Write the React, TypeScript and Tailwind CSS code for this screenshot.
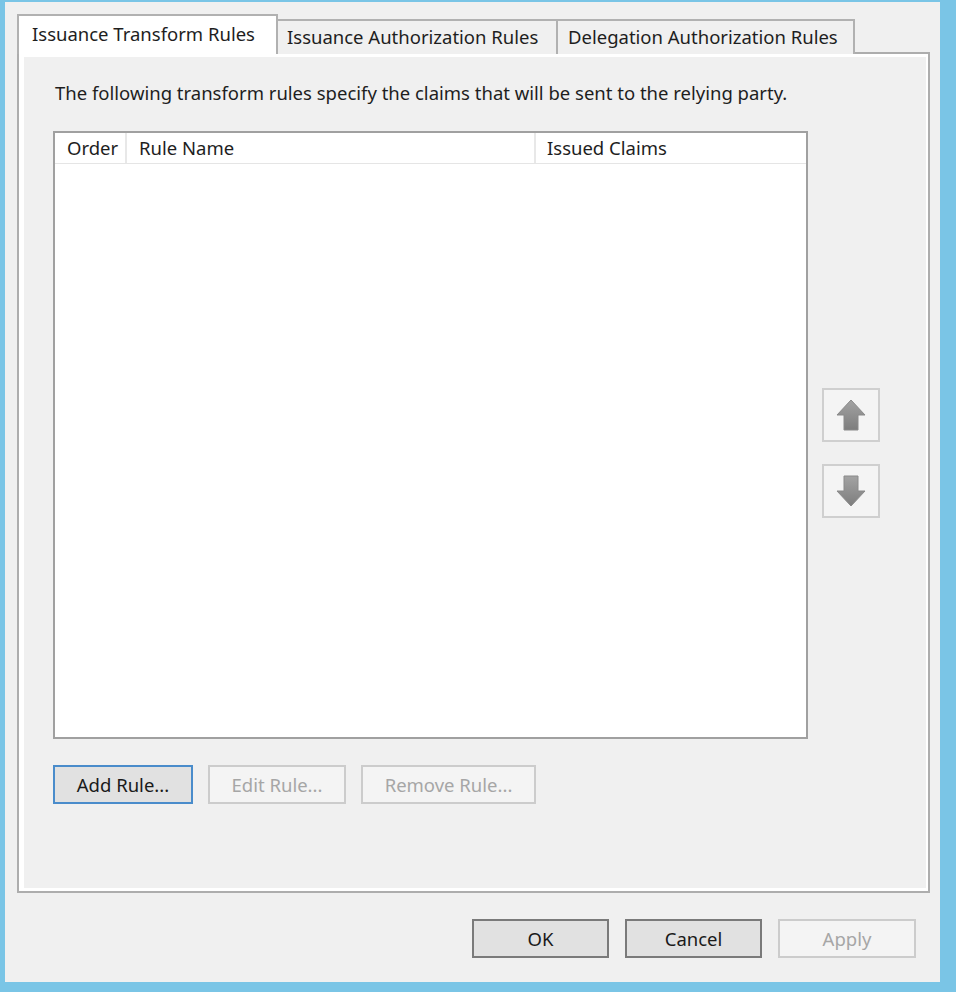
import React from "react";

const font = { fontFamily: '"Noto Sans", "Open Sans", sans-serif' };

function Arrow({ down }: { down?: boolean }) {
    return (
        <svg width="30" height="32" viewBox="0 0 30 32" className={down ? "rotate-180" : ""}>
            <defs>
                <linearGradient id={down ? "gd" : "gu"} x1="0" y1="0" x2="0" y2="1">
                    <stop offset="0" stopColor={down ? "#7d7d7d" : "#a3a3a3"} />
                    <stop offset="1" stopColor={down ? "#a3a3a3" : "#7d7d7d"} />
                </linearGradient>
            </defs>
            <path
                d="M15 1 L29 16 L22 16 L22 31 L8 31 L8 16 L1 16 Z"
                fill={`url(#${down ? "gd" : "gu"})`}
                stroke="#8a8a8a"
                strokeWidth="1"
                strokeLinejoin="round"
            />
        </svg>
    );
}

function Tabs() {
    return (
        <div className="flex items-end h-[40px] -mb-[2px] relative z-10 text-[18.5px] leading-[26px] text-[#1e1e1e]">
            <div className="w-[261px] h-[40px] bg-white border-2 border-b-0 border-[#b1b1b1] pl-[13px] pt-[5px] whitespace-nowrap">
                Issuance Transform Rules
            </div>
            <div className="w-[280px] h-[35px] bg-[#f0f0f0] border-2 border-l-0 border-b-0 border-[#b1b1b1] pl-[9px] pt-[3px] whitespace-nowrap">
                Issuance Authorization Rules
            </div>
            <div className="w-[297px] h-[35px] bg-[#f0f0f0] border-2 border-l-0 border-b-0 border-[#b1b1b1] pl-[10px] pt-[3px] whitespace-nowrap">
                Delegation Authorization Rules
            </div>
        </div>
    );
}

function RuleList() {
    return (
        <div className="w-[755px] h-[608px] bg-white border-2 border-[#a0a0a0] flex flex-col">
            <div className="h-[31px] flex border-b border-[#e5e5e5] text-[18.5px] leading-[26px] text-[#1e1e1e]">
                <div className="w-[72px] pl-[12px] pt-[2px] border-r-2 border-[#e8e8e8]">Order</div>
                <div className="w-[409px] pl-[12px] pt-[2px] border-r-2 border-[#e8e8e8]">Rule Name</div>
                <div className="flex-1 pl-[11px] pt-[2px]">Issued Claims</div>
            </div>
        </div>
    );
}

export default function App() {
    return (
        <div style={font} className="w-[956px] h-[992px] bg-[#7ac5e6] pl-[5px] pt-[2px] pr-[16px] pb-[10px]">
            <div className="h-full bg-[#f0f0f0] flex flex-col pl-[12px] pt-[12px] pr-[10px]">
                <Tabs />

                <div className="h-[841px] border-2 border-[#adadad] bg-white pl-[5px] pt-[3px] pr-[2px] pb-[3px]">
                    <div className="h-full bg-[#f0f0f0] flex flex-col">
                        <p className="mt-[24px] ml-[31px] h-[24px] leading-[24px] text-[18.5px] text-[#1e1e1e] whitespace-nowrap">
                            The following transform rules specify the claims that will be sent to the relying party.
                        </p>

                        <div className="mt-[26px] ml-[29px] flex">
                            <RuleList />
                            <div className="ml-[14px] pt-[257px] flex flex-col gap-[22px]">
                                <div className="w-[58px] h-[54px] border-2 border-[#cfcfcf] bg-[#f4f4f4] flex items-center justify-center">
                                    <Arrow />
                                </div>
                                <div className="w-[58px] h-[54px] border-2 border-[#cfcfcf] bg-[#f4f4f4] flex items-center justify-center">
                                    <Arrow down />
                                </div>
                            </div>
                        </div>

                        <div className="mt-[26px] ml-[29px] flex gap-[15px] text-[18.5px]">
                            <button className="w-[140px] h-[39px] border-2 border-[#4a8ccb] bg-[#e1e1e1] text-[#1a1a1a]">
                                Add Rule...
                            </button>
                            <button className="w-[138px] h-[39px] border-2 border-[#cccccc] bg-[#f4f4f4] text-[#a6a6a6]">
                                Edit Rule...
                            </button>
                            <button className="w-[175px] h-[39px] border-2 border-[#cccccc] bg-[#f4f4f4] text-[#a6a6a6]">
                                Remove Rule...
                            </button>
                        </div>
                    </div>
                </div>

                <div className="mt-[26px] flex justify-end gap-[16px] pr-[14px] text-[18.5px]">
                    <button className="w-[137px] h-[39px] border-2 border-[#7a7a7a] bg-[#e1e1e1] text-[#1a1a1a]">
                        OK
                    </button>
                    <button className="w-[137px] h-[39px] border-2 border-[#7a7a7a] bg-[#e1e1e1] text-[#1a1a1a]">
                        Cancel
                    </button>
                    <button className="w-[138px] h-[39px] border-2 border-[#cccccc] bg-[#f4f4f4] text-[#a6a6a6]">
                        Apply
                    </button>
                </div>
            </div>
        </div>
    );
}
